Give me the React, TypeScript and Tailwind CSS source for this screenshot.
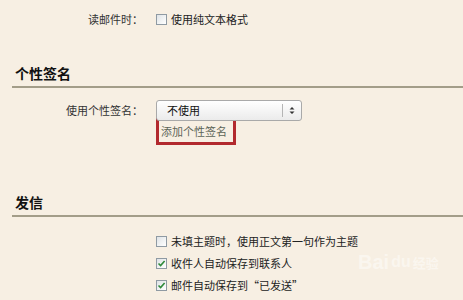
import React from "react";

function Box({ checked }: { checked?: boolean }) {
  return (
    <span className="w-[11px] h-[11px] shrink-0 border border-[#8f9aa3] bg-gradient-to-br from-[#dfe3e6] to-[#ffffff] flex items-center justify-center">
      {checked && (
        <svg width="9" height="9" viewBox="0 0 9 9">
          <path d="M1.5 4.5 L3.6 6.6 L7.6 2" fill="none" stroke="#2f8a3a" strokeWidth="1.6" />
        </svg>
      )}
    </span>
  );
}

export default function App() {
  return (
    <div className="relative w-[463px] h-[300px] overflow-hidden bg-[#f7efe3] text-[11px] text-[#333] font-['Noto_Sans_CJK_SC',sans-serif]">
      <div className="flex items-center pt-[12px] h-[27px] leading-[15px]">
        <span className="w-[143px] text-right">读邮件时：</span>
        <span className="ml-[13px] flex items-center gap-[4px]">
          <Box />
          <span className="text-[#222]">使用纯文本格式</span>
        </span>
      </div>

      <div className="mt-[38px] ml-[12px] pl-[3px] pb-[5px] border-b-2 border-[#a39d89]">
        <span className="text-[14px] leading-[16px] font-bold text-[#111] block">个性签名</span>
      </div>

      <div className="flex items-center mt-[12px] h-[21px]">
        <span className="w-[143px] text-right">使用个性签名：</span>
        <div className="ml-[13px] w-[146px] h-[21px] rounded-[3px] border border-[#a9a9a9] bg-gradient-to-b from-[#ffffff] to-[#ebebeb] flex items-center">
          <span className="pl-[10px] flex-1 text-[#111]">不使用</span>
          <span className="w-px h-[13px] bg-[#b5b5b5]" />
          <span className="w-[18px] flex flex-col items-center justify-center leading-none">
            <svg width="6" height="9" viewBox="0 0 6 9">
              <path d="M0.5 3.5 L3 1 L5.5 3.5 Z M0.5 5.5 L3 8 L5.5 5.5 Z" fill="#333" />
            </svg>
          </span>
        </div>
      </div>
      <div className="ml-[156px] mt-[-3px] w-[80px] h-[27px] border-[3px] border-[#b2292e] flex items-center pl-[2px]">
        <span className="text-[#5d6558] leading-[15px]">添加个性签名</span>
      </div>

      <div className="mt-[49px] ml-[12px] pl-[3px] pb-[5px] border-b-2 border-[#a39d89]">
        <span className="text-[14px] leading-[16px] font-bold text-[#111] block">发信</span>
      </div>

      <div className="mt-[13px] ml-[156px] flex flex-col text-[#222]">
        <div className="h-[22px] flex items-center gap-[4px]">
          <Box />
          <span>未填主题时，使用正文第一句作为主题</span>
        </div>
        <div className="h-[22px] flex items-center gap-[4px]">
          <Box checked />
          <span>收件人自动保存到联系人</span>
        </div>
        <div className="h-[22px] flex items-center gap-[4px]">
          <Box checked />
          <span>邮件自动保存到“已发送”</span>
        </div>
      </div>

      <div className="absolute left-[358px] top-[252px] flex items-center gap-[2px] text-white/45 font-['Liberation_Sans',sans-serif] text-[20px] font-bold leading-none pointer-events-none">
        <span>Bai</span>
        <span className="text-[16px]">du</span>
        <span className="text-[13px] font-['Noto_Sans_CJK_SC',sans-serif]">经验</span>
      </div>
    </div>
  );
}
